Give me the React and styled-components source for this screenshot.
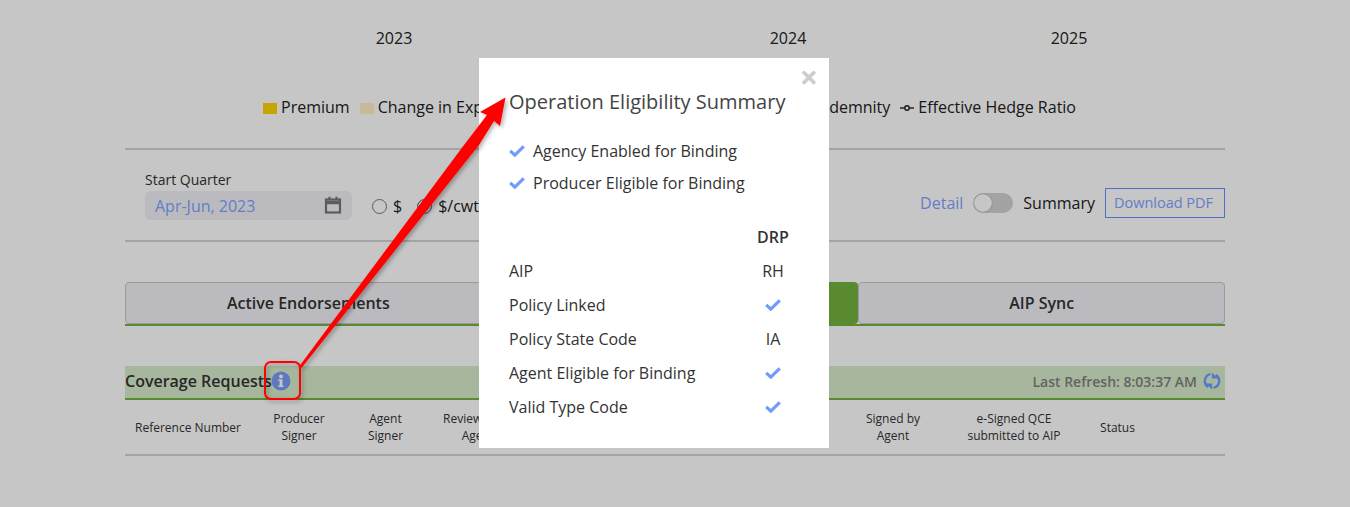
import React from "react";
import styled, { createGlobalStyle } from "styled-components";

const Global = createGlobalStyle`
  html, body { margin: 0; padding: 0; background: #fff; }
  body { font-family: "Open Sans", "Noto Sans", sans-serif; color: #222; }
  * { box-sizing: border-box; }
`;

const Page = styled.div`
  position: relative;
  width: 1350px;
  height: 507px;
  overflow: hidden;
  background: #fff;
`;

const Content = styled.main`
  width: 1100px;
  margin: 0 auto;
  padding-top: 28px;
`;

const Years = styled.div`
  display: grid;
  grid-template-columns: 229px 80px 314px 80px 201px 80px;
  height: 20px;
  font-size: 16px;
  line-height: 20px;
  text-align: center;
`;

const Legend = styled.div`
  display: flex;
  align-items: center;
  margin-top: 48px;
  padding-left: 138px;
  height: 22px;
  font-size: 16px;
  color: #222;
`;

const LegendItem = styled.span`
  display: inline-flex;
  align-items: center;
  margin-right: ${(p) => p.$gap || 10}px;
  white-space: nowrap;
`;

const Swatch = styled.i`
  display: block;
  width: 14px;
  height: 11px;
  margin: 2px 4px 0 0;
  background: ${(p) => p.$color};
`;

const HedgeMark = styled.svg`
  width: 14px;
  height: 8px;
  margin: 2px 4px 0 0;
`;

const Filters = styled.section`
  display: flex;
  align-items: center;
  margin-top: 30px;
  height: 94px;
  padding: 0 0 0 20px;
  border-top: 2px solid #d4d4d4;
  border-bottom: 2px solid #d4d4d4;
`;

const Field = styled.div`
  display: flex;
  flex-direction: column;
  width: 207px;
`;

const FieldLabel = styled.label`
  font-size: 14px;
  line-height: 18px;
  color: #333;
`;

const DateInput = styled.div`
  display: flex;
  align-items: center;
  justify-content: space-between;
  height: 29px;
  margin-top: 2px;
  padding: 2px 10px 0;
  border-radius: 6px;
  background: #f1f1f6;
  color: #7fa3ff;
  font-size: 16px;

  svg {
    margin-top: -3px;
  }
`;

const Radio = styled.span`
  display: inline-flex;
  align-items: center;
  margin-left: ${(p) => p.$left}px;
  margin-top: 22px;
  font-size: 16px;
  color: #222;
`;

const RadioDot = styled.i`
  display: block;
  width: 15px;
  height: 15px;
  margin-right: 6px;
  border-radius: 50%;
  border: 1px solid #777;
  background: ${(p) => (p.$on ? "#3f6fd8" : "#fff")};
  box-shadow: ${(p) => (p.$on ? "inset 0 0 0 2px #fff" : "none")};
`;

const RightTools = styled.div`
  display: flex;
  align-items: center;
  margin-left: auto;
  margin-top: 16px;
`;

const ToggleLabel = styled.span`
  font-size: 16px;
  color: ${(p) => (p.$link ? "#7fa3ff" : "#222")};
`;

const Toggle = styled.span`
  display: block;
  width: 40px;
  height: 20px;
  margin: 0 10px;
  padding: 1px;
  border-radius: 10px;
  background: #d2d2d2;
`;

const Knob = styled.i`
  display: block;
  width: 18px;
  height: 18px;
  border-radius: 50%;
  background: #fff;
  box-shadow: 0 0 1px #666;
`;

const OutlineButton = styled.button`
  width: 120px;
  height: 30px;
  margin-left: 10px;
  padding: 0 3px 2px 0;
  border: 1px solid #648fff;
  background: #fff;
  color: #7fa3ff;
  font: 14.5px "Open Sans", sans-serif;
`;

const Tabs = styled.nav`
  display: grid;
  grid-template-columns: repeat(3, 1fr);
  margin-top: 40px;
  border-bottom: 2px solid #74b23f;
`;

const Tab = styled.button`
  height: 42px;
  padding: 0 0 1px;
  border: ${(p) => (p.$active ? "0" : "1px solid #c8c8c8")};
  border-radius: 4px;
  background: ${(p) => (p.$active ? "#74b23f" : "#f1f1f6")};
  color: ${(p) => (p.$active ? "#fff" : "#333")};
  font: 600 16px "Open Sans", sans-serif;
`;

const Band = styled.header`
  display: flex;
  align-items: center;
  justify-content: space-between;
  height: 34px;
  margin-top: 40px;
  padding: 0 4px 2px 0;
  background: #d8eccb;
  border-bottom: 2px solid #74b23f;
`;

const BandTitle = styled.h2`
  display: flex;
  align-items: center;
  margin: 0;
  font-size: 16px;
  font-weight: 600;
  color: #333;

  svg {
    margin-left: -1px;
  }
`;

const Refresh = styled.div`
  display: flex;
  align-items: center;
  gap: 6px;
  font-size: 14px;
  font-weight: 600;
  color: #808080;
`;

const HeadRow = styled.div`
  display: grid;
  grid-template-columns: 125px 98px 75px 110px 317px 86px 24px 108px 22px 55px;
  align-items: center;
  height: 56px;
  border-bottom: 2px solid #d4d4d4;
  font-size: 12px;
  line-height: 17px;
  color: #333;
  text-align: center;
`;

const HeadCell = styled.span`
  text-align: ${(p) => (p.$left ? "left" : "center")};
  padding-left: ${(p) => (p.$left ? "10px" : "0")};
`;

const Backdrop = styled.div`
  position: absolute;
  inset: 0;
  background: rgba(0, 0, 0, 0.224);
`;

const Modal = styled.section`
  position: absolute;
  left: 479px;
  top: 58px;
  width: 350px;
  height: 390px;
  padding: 30px;
  background: #fff;
`;

const Close = styled.span`
  position: absolute;
  top: 3px;
  right: 11px;
  font-size: 32px;
  line-height: 32px;
  font-weight: 700;
  color: #ccc;
`;

const ModalTitle = styled.h3`
  margin: 0;
  font-size: 20px;
  line-height: 28px;
  font-weight: 400;
  color: #444;
`;

const Checks = styled.ul`
  list-style: none;
  margin: 19px 0 0;
  padding: 0;
`;

const CheckRow = styled.li`
  display: flex;
  align-items: center;
  gap: 8px;
  height: 32px;
  font-size: 16px;
  color: #333;
`;

const Grid = styled.div`
  display: grid;
  grid-template-columns: 1fr 50px;
  grid-auto-rows: 34px;
  align-items: center;
  margin: 21px 1px 0 0;
  font-size: 16px;
  color: #333;
`;

const GridHead = styled.span`
  text-align: center;
  font-weight: 600;
`;

const GridValue = styled.span`
  display: flex;
  justify-content: center;
`;

const Annotation = styled.svg`
  position: absolute;
  left: 0;
  top: 0;
  width: 1350px;
  height: 507px;
  pointer-events: none;
`;

const Check = () => (
  <svg width="16" height="12" viewBox="0 0 16 12">
    <path d="M1.2 5.8l4.6 4.3L14.8 1.4" fill="none" stroke="#6f9bff" strokeWidth="3.2" />
  </svg>
);

const rows = [
  ["AIP", "RH"],
  ["Policy Linked", true],
  ["Policy State Code", "IA"],
  ["Agent Eligible for Binding", true],
  ["Valid Type Code", true],
];

export default function App() {
  return (
    <Page>
      <Global />
      <Content>
        <Years>
          <span />
          <span>2023</span>
          <span />
          <span>2024</span>
          <span />
          <span>2025</span>
        </Years>
        <Legend>
          <LegendItem $gap={10}><Swatch $color="#ffd500" />Premium</LegendItem>
          <LegendItem $gap={204}><Swatch $color="#fff0c4" />Change in Expected Revenue</LegendItem>
          <LegendItem $gap={10}><Swatch $color="#a9a9a9" />Indemnity</LegendItem>
          <LegendItem>
            <HedgeMark viewBox="0 0 14 8">
              <path d="M0 4h14" stroke="#222" strokeWidth="1.4" />
              <circle cx="7" cy="4" r="2.2" fill="#fff" stroke="#222" strokeWidth="1.4" />
            </HedgeMark>
            Effective Hedge Ratio
          </LegendItem>
        </Legend>
        <Filters>
          <Field>
            <FieldLabel>Start Quarter</FieldLabel>
            <DateInput>
              Apr-Jun, 2023
              <svg width="18" height="18" viewBox="0 0 18 18" fill="none" stroke="#777" strokeWidth="2.2">
                <rect x="2" y="3.5" width="14" height="13" />
                <path d="M2 6.5h14" strokeWidth="3.5" />
                <path d="M5.5 .8v3M12.5 .8v3" />
              </svg>
            </DateInput>
          </Field>
          <Radio $left={20}><RadioDot />$</Radio>
          <Radio $left={15}><RadioDot $on />$/cwt</Radio>
          <RightTools>
            <ToggleLabel $link>Detail</ToggleLabel>
            <Toggle><Knob /></Toggle>
            <ToggleLabel>Summary</ToggleLabel>
            <OutlineButton>Download PDF</OutlineButton>
          </RightTools>
        </Filters>
        <Tabs>
          <Tab>Active Endorsements</Tab>
          <Tab $active>Coverage Requests</Tab>
          <Tab>AIP Sync</Tab>
        </Tabs>
        <Band>
          <BandTitle>
            Coverage Requests
            <svg width="20" height="20" viewBox="0 0 20 20">
              <circle cx="10" cy="10" r="9.5" fill="#7b9cf5" />
              <circle cx="10" cy="5.4" r="1.9" fill="#fff" />
              <path d="M7.4 8.2h4v6.2h1.2v1.6H7.4v-1.6h1.2V9.8H7.4z" fill="#fff" />
            </svg>
          </BandTitle>
          <Refresh>
            Last Refresh: 8:03:37 AM
            <svg width="18" height="18" viewBox="0 0 18 18" fill="none" stroke="#6f9bff" strokeWidth="2.4">
              <path d="M7.4 2.2A7 7 0 0 0 5.2 15" />
              <path d="M10.6 15.8A7 7 0 0 0 12.8 3" />
              <path d="M2.8 11.6h6.4v6z" fill="#6f9bff" stroke="none" />
              <path d="M15.2 6.4H8.8V.4z" fill="#6f9bff" stroke="none" />
            </svg>
          </Refresh>
        </Band>
        <HeadRow>
          <HeadCell $left>Reference Number</HeadCell>
          <HeadCell>Producer<br />Signer</HeadCell>
          <HeadCell>Agent<br />Signer</HeadCell>
          <HeadCell>Reviewed by<br />Agent</HeadCell>
          <span />
          <HeadCell>Signed by<br />Agent</HeadCell>
          <span />
          <HeadCell>e-Signed QCE<br />submitted to AIP</HeadCell>
          <span />
          <HeadCell>Status</HeadCell>
        </HeadRow>
      </Content>
      <Backdrop />
      <Modal>
        <Close>×</Close>
        <ModalTitle>Operation Eligibility Summary</ModalTitle>
        <Checks>
          <CheckRow><Check />Agency Enabled for Binding</CheckRow>
          <CheckRow><Check />Producer Eligible for Binding</CheckRow>
        </Checks>
        <Grid>
          <span />
          <GridHead>DRP</GridHead>
          {rows.map(([label, value]) => (
            <React.Fragment key={label}>
              <span>{label}</span>
              <GridValue>{value === true ? <Check /> : value}</GridValue>
            </React.Fragment>
          ))}
        </Grid>
      </Modal>
      <Annotation viewBox="0 0 1350 507">
        <defs>
          <filter id="soft" x="-10%" y="-10%" width="120%" height="120%">
            <feDropShadow dx="2" dy="2" stdDeviation="2" floodColor="#000" floodOpacity="0.3" />
          </filter>
        </defs>
        <g filter="url(#soft)">
          <rect x="265" y="362" width="35" height="37" rx="6" fill="none" stroke="#f00" strokeWidth="2" />
          <path d="M299.5 366L464 145L487 115L480 112L505.5 97.5L500 126L494 121L479 145L301.5 368Z" fill="#f00" />
        </g>
      </Annotation>
    </Page>
  );
}
